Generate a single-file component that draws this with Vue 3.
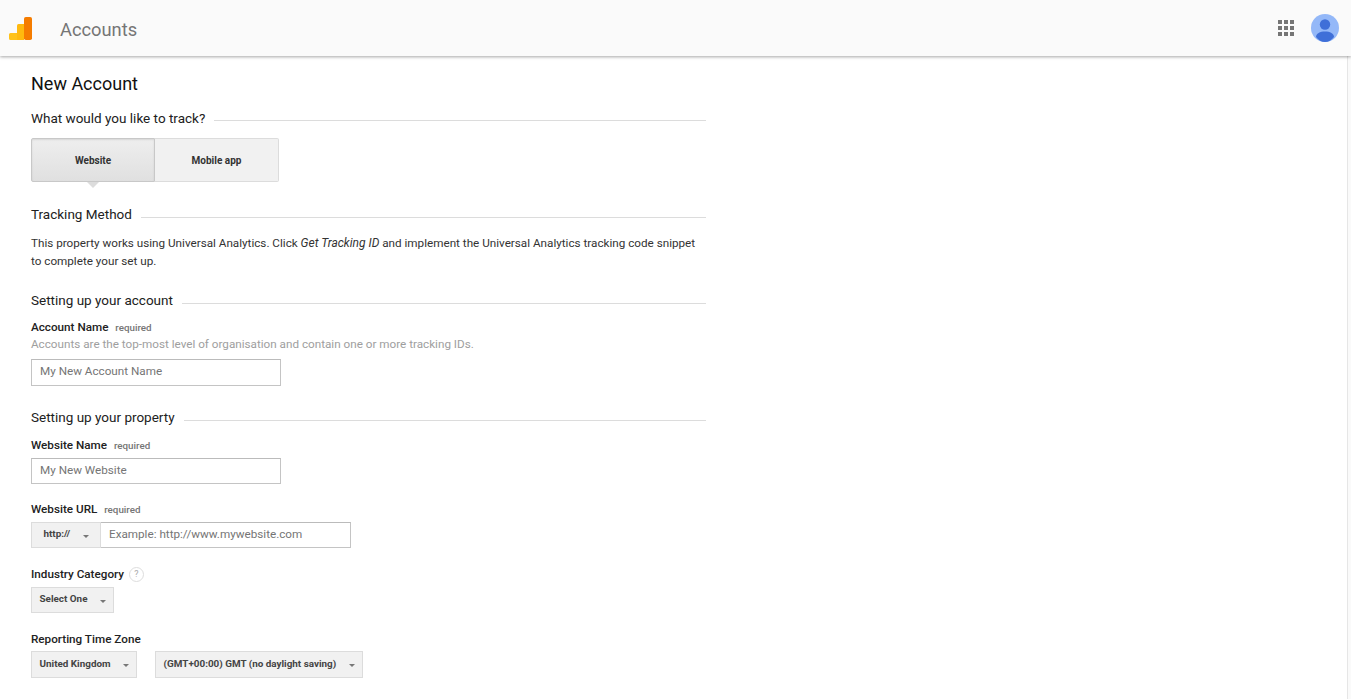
<script setup>
const zone = ['United Kingdom', '(GMT+00:00) GMT (no daylight saving)']
const dots = Array.from({ length: 9 })
</script>

<template>
  <div class="page">
    <header class="topbar">
      <svg class="logo" width="23" height="23" viewBox="0 0 23 23">
        <rect x="15" y="0" width="8" height="23" rx="1.800" fill="#f57c00" />
        <path d="M8 8.500A1.500 1.500 0 0 1 9.500 7H15v16H8z" fill="#ffb90f" />
        <path d="M0 17.500A1.500 1.500 0 0 1 1.500 16H8v7H1.500A1.500 1.500 0 0 1 0 21.500z" fill="#ffc21a" />
      </svg>
      <span class="brand">Accounts</span>
      <span class="spacer"></span>
      <div class="apps"><i v-for="(d, n) in dots" :key="n"></i></div>
      <svg class="avatar" width="28" height="28" viewBox="0 0 28 28">
        <circle cx="14" cy="14" r="14" fill="#94b8f8" />
        <circle cx="14" cy="10.500" r="5.200" fill="#3f6fd8" />
        <path d="M5 23c0-3.500 4-5.500 9-5.500s9 2 9 5.500c-2.300 3-5.500 5-9 5s-6.700-2-9-5z" fill="#3f6fd8" />
      </svg>
    </header>

    <div class="body">
      <main class="content">
        <h1>New Account</h1>

        <div class="section first"><span>What would you like to track?</span></div>
        <div class="toggle">
          <button class="on">Website</button>
          <button>Mobile app</button>
        </div>

        <div class="section method"><span>Tracking Method</span></div>
        <p class="copy">This property works using Universal Analytics. Click <em>Get Tracking ID</em> and implement the Universal Analytics tracking code snippet to complete your set up.</p>

        <div class="section account"><span>Setting up your account</span></div>
        <div class="label first-label">Account Name <small>required</small></div>
        <div class="hint">Accounts are the top-most level of organisation and contain one or more tracking IDs.</div>
        <div class="input acct">My New Account Name</div>

        <div class="section property"><span>Setting up your property</span></div>
        <div class="label site-label">Website Name <small>required</small></div>
        <div class="input site">My New Website</div>

        <div class="label gap-url">Website URL <small>required</small></div>
        <div class="url">
          <div class="select proto">http://<b></b></div>
          <div class="input url-input">Example: http://www.mywebsite.com</div>
        </div>

        <div class="label gap-ind">Industry Category <span class="help">?</span></div>
        <div class="select one">Select One<b></b></div>

        <div class="label gap-zone">Reporting Time Zone</div>
        <div class="zones">
          <div v-for="z in zone" :key="z" class="select zone">{{ z }}<b></b></div>
        </div>
      </main>
      <div class="rail"></div>
    </div>
  </div>
</template>

<style scoped>
.page { height: 699px; overflow: hidden; background: #fff; font-family: Roboto, sans-serif; color: #212121; font-size: 11.700px; }
.topbar { position: relative; z-index: 1; height: 56px; box-sizing: border-box; display: flex; align-items: center; background: #fafafa; padding: 0 12px 0 9px; box-shadow: 0 1px 3px rgba(0,0,0,.35); }
.logo { flex: none; margin-top: 1px; }
.brand { margin-left: 28px; margin-top: 2px; font-size: 18.300px; color: #757575; }
.spacer { flex: 1; }
.apps { display: grid; grid-template-columns: repeat(3, 4px); gap: 2px; margin-right: 17px; }
.apps i { width: 4px; height: 4px; background: #757575; }
.avatar { margin-top: -1px; }
.body { display: flex; justify-content: space-between; height: 643px; }
.rail { width: 3px; background: #fafafa; border-left: 1px solid #e6e6e6; }
.content { padding: 17px 0 0 31px; width: 675px; }
h1 { margin: 0; font-size: 18px; font-weight: 400; line-height: 22px; color: #111; }
.section { display: flex; align-items: center; font-size: 13.500px; line-height: 18px; color: #212121; }
.section::after { content: ""; flex: 1; height: 1px; background: #dcdcdc; margin-left: 9px; margin-top: 6px; }
.first { margin-top: 14px; }
.first::after { margin-top: 4px; }
.toggle { display: flex; margin-top: 11px; position: relative; width: 248px; }
.toggle button { flex: 1; height: 44px; padding: 0; border: 1px solid #dcdcdc; background: #f1f1f1; font: 700 10px Roboto, sans-serif; color: #333; border-radius: 0 2px 2px 0; border-left: 0; }
.toggle .on { flex: none; width: 124px; border: 1px solid #c8c8c8; background: linear-gradient(#eee, #e0e0e0); border-radius: 2px 0 0 2px; box-shadow: inset 0 1px 2px rgba(0,0,0,.1); position: relative; }
.toggle .on::after { content: ""; position: absolute; left: 55px; bottom: -7px; border: 6px solid transparent; border-bottom: 0; border-top-color: #dcdcdc; }
.method { margin-top: 23px; }
.copy { margin: 11px 0 0; line-height: 18px; color: #333; }
.copy em { font-size: 12px; }
.account { margin-top: 21px; }
.label { font-weight: 500; line-height: 16px; color: #222; }
.first-label { margin-top: 10px; }
.site-label { margin-top: 11px; }
.label small { font-size: 9.800px; font-weight: 500; color: #757575; margin-left: 4px; }
.hint { color: #9e9e9e; line-height: 16px; margin-top: 0; }
.input { width: 250px; height: 27px; box-sizing: border-box; border: 1px solid #c4c4c4; border-top-color: #bbb; color: #757575; padding-left: 8px; line-height: 24px; margin-top: 7px; }
.acct { line-height: 23px; }
.property { margin-top: 22px; }
.site { margin-top: 4px; height: 26px; line-height: 23px; }
.gap-url { margin-top: 17px; }
.url { display: flex; margin-top: 4px; }
.select { display: inline-flex; align-items: center; box-sizing: border-box; height: 26px; padding-bottom: 3px; background: #f1f1f1; border: 1px solid #dcdcdc; font-size: 9.900px; font-weight: 700; color: #444; padding-left: 7.500px; position: relative; }
.select b { position: absolute; right: 7px; top: 12px; border: 3px solid transparent; border-bottom: 0; border-top: 3px solid #777; }
.proto { width: 70px; padding-left: 11.500px; }
.proto b { right: 11px; }
.url-input { margin: 0; width: 250px; border-left: 0; height: 26px; line-height: 23px; }
.gap-ind { margin-top: 18px; }
.help { display: inline-block; width: 13px; height: 13px; border: 1px solid #ddd; border-radius: 50%; font-size: 9px; line-height: 13px; text-align: center; color: #aaa; margin-left: 2px; vertical-align: middle; font-weight: 400; }
.one { width: 83px; display: flex; margin-top: 5px; }
.gap-zone { margin-top: 18px; }
.zones { display: flex; gap: 18px; margin-top: 4px; }
.zone { height: 27px; padding-right: 25.500px; }
</style>
